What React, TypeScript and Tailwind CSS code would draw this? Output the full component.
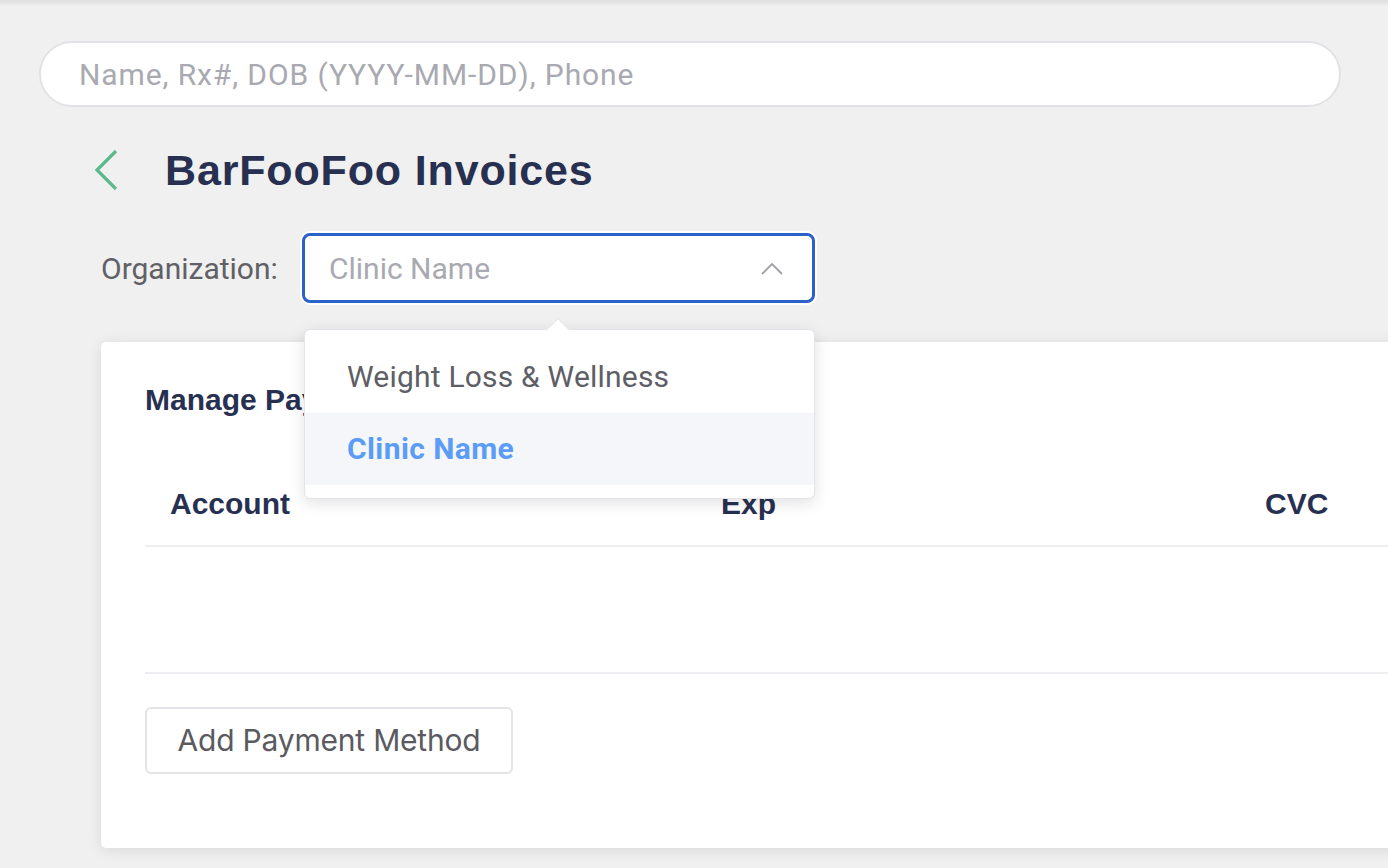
import React from "react";

export default function App() {
  return (
    <div className="relative w-[1388px] h-[868px] overflow-hidden bg-[#f0f0f0]" style={{ fontFamily: "Roboto, 'Liberation Sans', sans-serif" }}>
      <div className="absolute inset-x-0 top-0 h-[6px] bg-gradient-to-b from-[rgba(0,0,0,0.08)] to-transparent" />
      <div className="pt-[41px] pl-[39px] pr-[47px]">
        <div className="h-[66px] rounded-full border-2 border-[#e2e2e6] bg-white flex items-center pl-[38px] text-[30px] tracking-[0.9px] text-[#a9a9b1] font-['Roboto']">
          Name, Rx#, DOB (YYYY-MM-DD), Phone
        </div>
      </div>

      <div className="flex items-center mt-[33px] h-[60px] pl-[93px]">
        <svg width="26" height="42" viewBox="0 0 26 42" className="shrink-0">
          <polyline points="23,2 4,21 23,40" fill="none" stroke="#5bb98b" strokeWidth="3.2" />
        </svg>
        <h1 className="ml-[46px] text-[43px] font-bold text-[#283052] font-['Liberation_Sans'] leading-none tracking-[0.85px]">
          BarFooFoo Invoices
        </h1>
      </div>

      <div className="flex items-center mt-[33px] pl-[101px]">
        <span className="text-[30px] text-[#606066] font-['Roboto'] w-[201px]">Organization:</span>
        <div className="relative">
          <div className="w-[513px] h-[70px] rounded-[8px] border-[3px] border-[#2a62c9] bg-white shadow-[0_0_0_2px_#ffffff] flex items-center pl-[24px] pr-[28px] justify-between">
            <span className="text-[30px] text-[#a9a9b1] font-['Roboto']">Clinic Name</span>
            <svg width="24" height="16" viewBox="0 0 24 16">
              <polyline points="2,14 12,4 22,14" fill="none" stroke="#a0a0a6" strokeWidth="1.8" />
            </svg>
          </div>
          <div className="absolute left-[2px] top-[96px] w-[511px] z-20 bg-white rounded-[6px] border border-[#e3e3ea] shadow-[0_4px_16px_rgba(0,0,0,0.12)] pt-[11px] pb-[13px]">
            <div className="absolute left-[245px] -top-[9px] w-[16px] h-[16px] rotate-45 bg-white border-l border-t border-[#e3e3ea]" />
            <div className="relative h-[72px] flex items-center pl-[42px] pb-[2px] text-[30px] tracking-[0.2px] text-[#5e5e66] font-['Roboto']">
              Weight Loss &amp; Wellness
            </div>
            <div className="relative h-[72px] flex items-center pl-[42px] pb-[2px] text-[30px] tracking-[0.4px] font-bold text-[#5a9cf6] bg-[#f5f6fa] font-['Roboto']">
              Clinic Name
            </div>
          </div>
        </div>
      </div>

      <div className="ml-[101px] mt-[39px] w-[1400px] h-[506px] bg-white rounded-[5px] shadow-[0_2px_14px_rgba(0,0,0,0.1)] pl-[44px] pt-[41px]">
        <h2 className="text-[30px] leading-[34px] font-bold text-[#283052] font-['Liberation_Sans']">Manage Payment Methods</h2>
        <div className="mt-[44px] grid grid-cols-[551px_544px_1fr] h-[86px] items-center border-b-2 border-[#eeeef2] text-[30px] font-bold text-[#283052] font-['Liberation_Sans']">
          <div className="pl-[25px]">Account</div>
          <div className="pl-[25px]">Exp</div>
          <div className="pl-[25px]">CVC</div>
        </div>
        <div className="h-[127px] border-b-2 border-[#eeeef2]" />
        <button className="mt-[33px] h-[67px] w-[368px] rounded-[6px] border-2 border-[#e3e3e8] bg-white text-[30px] tracking-[-0.2px] text-[#5a5a60] font-['Inter']">
          Add Payment Method
        </button>
      </div>
    </div>
  );
}
